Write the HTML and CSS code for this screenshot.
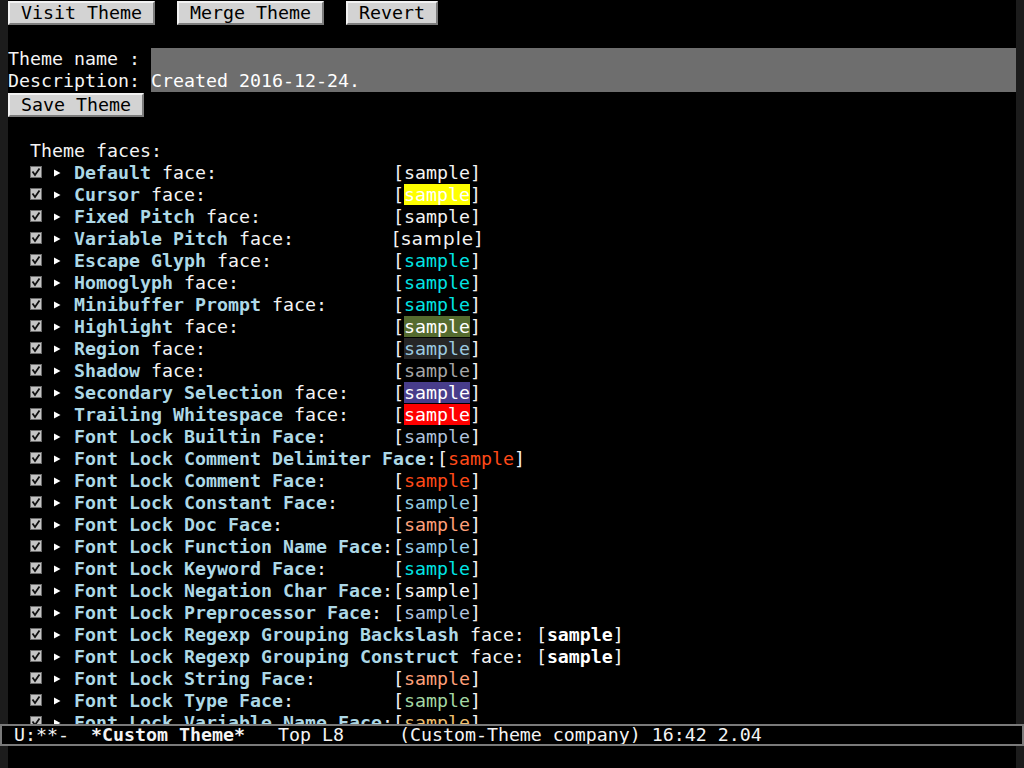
FILE: index.html
```html
<!DOCTYPE html>
<html>
<head>
<meta charset="utf-8">
<title>*Custom Theme*</title>
<link rel="stylesheet" href="styles.css">
</head>
<body>
<div class="window">
  <div class="fringe"></div>
  <div class="buffer">
    <div class="btnrow"><span class="btn">Visit Theme</span><span class="btn">Merge Theme</span><span class="btn">Revert</span></div>
    <div class="line"> </div>
    <div class="fieldrow"><span class="flabel">Theme name : </span><span class="field"> </span></div>
    <div class="fieldrow"><span class="flabel">Description: </span><span class="field">Created 2016-12-24.</span></div>
    <div class="btnrow"><span class="btn">Save Theme</span></div>
    <div class="line"> </div>
    <div class="line">  Theme faces:</div>
    <div class="faces">
      <div class="row">  <span class="cb"><svg width="12" height="12" viewBox="0 0 12 12"><rect x="0.5" y="0.5" width="11" height="11" fill="#c4c4c4" stroke="#6c6c6c"/><path d="M2.5 5.5 L5 9 L9.5 2.5" fill="none" stroke="#111" stroke-width="1.8"/></svg></span> <span class="tri"><svg width="7" height="8" viewBox="0 0 7 8"><polygon points="0,0.5 6.5,4 0,7.5" fill="#fff"/></svg></span> <span class="label"><b class="tag">Default</b> face:</span>[<span class="s">sample</span>]</div>
      <div class="row">  <span class="cb"><svg width="12" height="12" viewBox="0 0 12 12"><rect x="0.5" y="0.5" width="11" height="11" fill="#c4c4c4" stroke="#6c6c6c"/><path d="M2.5 5.5 L5 9 L9.5 2.5" fill="none" stroke="#111" stroke-width="1.8"/></svg></span> <span class="tri"><svg width="7" height="8" viewBox="0 0 7 8"><polygon points="0,0.5 6.5,4 0,7.5" fill="#fff"/></svg></span> <span class="label"><b class="tag">Cursor</b> face:</span>[<span class="s s-cursor">sample</span>]</div>
      <div class="row">  <span class="cb"><svg width="12" height="12" viewBox="0 0 12 12"><rect x="0.5" y="0.5" width="11" height="11" fill="#c4c4c4" stroke="#6c6c6c"/><path d="M2.5 5.5 L5 9 L9.5 2.5" fill="none" stroke="#111" stroke-width="1.8"/></svg></span> <span class="tri"><svg width="7" height="8" viewBox="0 0 7 8"><polygon points="0,0.5 6.5,4 0,7.5" fill="#fff"/></svg></span> <span class="label"><b class="tag">Fixed Pitch</b> face:</span>[<span class="s">sample</span>]</div>
      <div class="row">  <span class="cb"><svg width="12" height="12" viewBox="0 0 12 12"><rect x="0.5" y="0.5" width="11" height="11" fill="#c4c4c4" stroke="#6c6c6c"/><path d="M2.5 5.5 L5 9 L9.5 2.5" fill="none" stroke="#111" stroke-width="1.8"/></svg></span> <span class="tri"><svg width="7" height="8" viewBox="0 0 7 8"><polygon points="0,0.5 6.5,4 0,7.5" fill="#fff"/></svg></span> <span class="label"><b class="tag">Variable Pitch</b> face:</span><span class="s-var">[sample]</span></div>
      <div class="row">  <span class="cb"><svg width="12" height="12" viewBox="0 0 12 12"><rect x="0.5" y="0.5" width="11" height="11" fill="#c4c4c4" stroke="#6c6c6c"/><path d="M2.5 5.5 L5 9 L9.5 2.5" fill="none" stroke="#111" stroke-width="1.8"/></svg></span> <span class="tri"><svg width="7" height="8" viewBox="0 0 7 8"><polygon points="0,0.5 6.5,4 0,7.5" fill="#fff"/></svg></span> <span class="label"><b class="tag">Escape Glyph</b> face:</span>[<span class="s s-cyan">sample</span>]</div>
      <div class="row">  <span class="cb"><svg width="12" height="12" viewBox="0 0 12 12"><rect x="0.5" y="0.5" width="11" height="11" fill="#c4c4c4" stroke="#6c6c6c"/><path d="M2.5 5.5 L5 9 L9.5 2.5" fill="none" stroke="#111" stroke-width="1.8"/></svg></span> <span class="tri"><svg width="7" height="8" viewBox="0 0 7 8"><polygon points="0,0.5 6.5,4 0,7.5" fill="#fff"/></svg></span> <span class="label"><b class="tag">Homoglyph</b> face:</span>[<span class="s s-cyan">sample</span>]</div>
      <div class="row">  <span class="cb"><svg width="12" height="12" viewBox="0 0 12 12"><rect x="0.5" y="0.5" width="11" height="11" fill="#c4c4c4" stroke="#6c6c6c"/><path d="M2.5 5.5 L5 9 L9.5 2.5" fill="none" stroke="#111" stroke-width="1.8"/></svg></span> <span class="tri"><svg width="7" height="8" viewBox="0 0 7 8"><polygon points="0,0.5 6.5,4 0,7.5" fill="#fff"/></svg></span> <span class="label"><b class="tag">Minibuffer Prompt</b> face:</span>[<span class="s s-cyan">sample</span>]</div>
      <div class="row">  <span class="cb"><svg width="12" height="12" viewBox="0 0 12 12"><rect x="0.5" y="0.5" width="11" height="11" fill="#c4c4c4" stroke="#6c6c6c"/><path d="M2.5 5.5 L5 9 L9.5 2.5" fill="none" stroke="#111" stroke-width="1.8"/></svg></span> <span class="tri"><svg width="7" height="8" viewBox="0 0 7 8"><polygon points="0,0.5 6.5,4 0,7.5" fill="#fff"/></svg></span> <span class="label"><b class="tag">Highlight</b> face:</span>[<span class="s s-highlight">sample</span>]</div>
      <div class="row">  <span class="cb"><svg width="12" height="12" viewBox="0 0 12 12"><rect x="0.5" y="0.5" width="11" height="11" fill="#c4c4c4" stroke="#6c6c6c"/><path d="M2.5 5.5 L5 9 L9.5 2.5" fill="none" stroke="#111" stroke-width="1.8"/></svg></span> <span class="tri"><svg width="7" height="8" viewBox="0 0 7 8"><polygon points="0,0.5 6.5,4 0,7.5" fill="#fff"/></svg></span> <span class="label"><b class="tag">Region</b> face:</span>[<span class="s s-region">sample</span>]</div>
      <div class="row">  <span class="cb"><svg width="12" height="12" viewBox="0 0 12 12"><rect x="0.5" y="0.5" width="11" height="11" fill="#c4c4c4" stroke="#6c6c6c"/><path d="M2.5 5.5 L5 9 L9.5 2.5" fill="none" stroke="#111" stroke-width="1.8"/></svg></span> <span class="tri"><svg width="7" height="8" viewBox="0 0 7 8"><polygon points="0,0.5 6.5,4 0,7.5" fill="#fff"/></svg></span> <span class="label"><b class="tag">Shadow</b> face:</span>[<span class="s s-shadow">sample</span>]</div>
      <div class="row">  <span class="cb"><svg width="12" height="12" viewBox="0 0 12 12"><rect x="0.5" y="0.5" width="11" height="11" fill="#c4c4c4" stroke="#6c6c6c"/><path d="M2.5 5.5 L5 9 L9.5 2.5" fill="none" stroke="#111" stroke-width="1.8"/></svg></span> <span class="tri"><svg width="7" height="8" viewBox="0 0 7 8"><polygon points="0,0.5 6.5,4 0,7.5" fill="#fff"/></svg></span> <span class="label"><b class="tag">Secondary Selection</b> face:</span>[<span class="s s-secondary">sample</span>]</div>
      <div class="row">  <span class="cb"><svg width="12" height="12" viewBox="0 0 12 12"><rect x="0.5" y="0.5" width="11" height="11" fill="#c4c4c4" stroke="#6c6c6c"/><path d="M2.5 5.5 L5 9 L9.5 2.5" fill="none" stroke="#111" stroke-width="1.8"/></svg></span> <span class="tri"><svg width="7" height="8" viewBox="0 0 7 8"><polygon points="0,0.5 6.5,4 0,7.5" fill="#fff"/></svg></span> <span class="label"><b class="tag">Trailing Whitespace</b> face:</span>[<span class="s s-trailing">sample</span>]</div>
      <div class="row">  <span class="cb"><svg width="12" height="12" viewBox="0 0 12 12"><rect x="0.5" y="0.5" width="11" height="11" fill="#c4c4c4" stroke="#6c6c6c"/><path d="M2.5 5.5 L5 9 L9.5 2.5" fill="none" stroke="#111" stroke-width="1.8"/></svg></span> <span class="tri"><svg width="7" height="8" viewBox="0 0 7 8"><polygon points="0,0.5 6.5,4 0,7.5" fill="#fff"/></svg></span> <span class="label"><b class="tag">Font Lock Builtin Face</b>:</span>[<span class="s s-builtin">sample</span>]</div>
      <div class="row">  <span class="cb"><svg width="12" height="12" viewBox="0 0 12 12"><rect x="0.5" y="0.5" width="11" height="11" fill="#c4c4c4" stroke="#6c6c6c"/><path d="M2.5 5.5 L5 9 L9.5 2.5" fill="none" stroke="#111" stroke-width="1.8"/></svg></span> <span class="tri"><svg width="7" height="8" viewBox="0 0 7 8"><polygon points="0,0.5 6.5,4 0,7.5" fill="#fff"/></svg></span> <span class="label"><b class="tag">Font Lock Comment Delimiter Face</b>:</span>[<span class="s s-comment">sample</span>]</div>
      <div class="row">  <span class="cb"><svg width="12" height="12" viewBox="0 0 12 12"><rect x="0.5" y="0.5" width="11" height="11" fill="#c4c4c4" stroke="#6c6c6c"/><path d="M2.5 5.5 L5 9 L9.5 2.5" fill="none" stroke="#111" stroke-width="1.8"/></svg></span> <span class="tri"><svg width="7" height="8" viewBox="0 0 7 8"><polygon points="0,0.5 6.5,4 0,7.5" fill="#fff"/></svg></span> <span class="label"><b class="tag">Font Lock Comment Face</b>:</span>[<span class="s s-comment">sample</span>]</div>
      <div class="row">  <span class="cb"><svg width="12" height="12" viewBox="0 0 12 12"><rect x="0.5" y="0.5" width="11" height="11" fill="#c4c4c4" stroke="#6c6c6c"/><path d="M2.5 5.5 L5 9 L9.5 2.5" fill="none" stroke="#111" stroke-width="1.8"/></svg></span> <span class="tri"><svg width="7" height="8" viewBox="0 0 7 8"><polygon points="0,0.5 6.5,4 0,7.5" fill="#fff"/></svg></span> <span class="label"><b class="tag">Font Lock Constant Face</b>:</span>[<span class="s s-constant">sample</span>]</div>
      <div class="row">  <span class="cb"><svg width="12" height="12" viewBox="0 0 12 12"><rect x="0.5" y="0.5" width="11" height="11" fill="#c4c4c4" stroke="#6c6c6c"/><path d="M2.5 5.5 L5 9 L9.5 2.5" fill="none" stroke="#111" stroke-width="1.8"/></svg></span> <span class="tri"><svg width="7" height="8" viewBox="0 0 7 8"><polygon points="0,0.5 6.5,4 0,7.5" fill="#fff"/></svg></span> <span class="label"><b class="tag">Font Lock Doc Face</b>:</span>[<span class="s s-string">sample</span>]</div>
      <div class="row">  <span class="cb"><svg width="12" height="12" viewBox="0 0 12 12"><rect x="0.5" y="0.5" width="11" height="11" fill="#c4c4c4" stroke="#6c6c6c"/><path d="M2.5 5.5 L5 9 L9.5 2.5" fill="none" stroke="#111" stroke-width="1.8"/></svg></span> <span class="tri"><svg width="7" height="8" viewBox="0 0 7 8"><polygon points="0,0.5 6.5,4 0,7.5" fill="#fff"/></svg></span> <span class="label"><b class="tag">Font Lock Function Name Face</b>:</span>[<span class="s s-function">sample</span>]</div>
      <div class="row">  <span class="cb"><svg width="12" height="12" viewBox="0 0 12 12"><rect x="0.5" y="0.5" width="11" height="11" fill="#c4c4c4" stroke="#6c6c6c"/><path d="M2.5 5.5 L5 9 L9.5 2.5" fill="none" stroke="#111" stroke-width="1.8"/></svg></span> <span class="tri"><svg width="7" height="8" viewBox="0 0 7 8"><polygon points="0,0.5 6.5,4 0,7.5" fill="#fff"/></svg></span> <span class="label"><b class="tag">Font Lock Keyword Face</b>:</span>[<span class="s s-cyan">sample</span>]</div>
      <div class="row">  <span class="cb"><svg width="12" height="12" viewBox="0 0 12 12"><rect x="0.5" y="0.5" width="11" height="11" fill="#c4c4c4" stroke="#6c6c6c"/><path d="M2.5 5.5 L5 9 L9.5 2.5" fill="none" stroke="#111" stroke-width="1.8"/></svg></span> <span class="tri"><svg width="7" height="8" viewBox="0 0 7 8"><polygon points="0,0.5 6.5,4 0,7.5" fill="#fff"/></svg></span> <span class="label"><b class="tag">Font Lock Negation Char Face</b>:</span>[<span class="s">sample</span>]</div>
      <div class="row">  <span class="cb"><svg width="12" height="12" viewBox="0 0 12 12"><rect x="0.5" y="0.5" width="11" height="11" fill="#c4c4c4" stroke="#6c6c6c"/><path d="M2.5 5.5 L5 9 L9.5 2.5" fill="none" stroke="#111" stroke-width="1.8"/></svg></span> <span class="tri"><svg width="7" height="8" viewBox="0 0 7 8"><polygon points="0,0.5 6.5,4 0,7.5" fill="#fff"/></svg></span> <span class="label"><b class="tag">Font Lock Preprocessor Face</b>:</span>[<span class="s s-builtin">sample</span>]</div>
      <div class="row">  <span class="cb"><svg width="12" height="12" viewBox="0 0 12 12"><rect x="0.5" y="0.5" width="11" height="11" fill="#c4c4c4" stroke="#6c6c6c"/><path d="M2.5 5.5 L5 9 L9.5 2.5" fill="none" stroke="#111" stroke-width="1.8"/></svg></span> <span class="tri"><svg width="7" height="8" viewBox="0 0 7 8"><polygon points="0,0.5 6.5,4 0,7.5" fill="#fff"/></svg></span> <span class="label"><b class="tag">Font Lock Regexp Grouping Backslash</b> face: </span>[<b class="s">sample</b>]</div>
      <div class="row">  <span class="cb"><svg width="12" height="12" viewBox="0 0 12 12"><rect x="0.5" y="0.5" width="11" height="11" fill="#c4c4c4" stroke="#6c6c6c"/><path d="M2.5 5.5 L5 9 L9.5 2.5" fill="none" stroke="#111" stroke-width="1.8"/></svg></span> <span class="tri"><svg width="7" height="8" viewBox="0 0 7 8"><polygon points="0,0.5 6.5,4 0,7.5" fill="#fff"/></svg></span> <span class="label"><b class="tag">Font Lock Regexp Grouping Construct</b> face: </span>[<b class="s">sample</b>]</div>
      <div class="row">  <span class="cb"><svg width="12" height="12" viewBox="0 0 12 12"><rect x="0.5" y="0.5" width="11" height="11" fill="#c4c4c4" stroke="#6c6c6c"/><path d="M2.5 5.5 L5 9 L9.5 2.5" fill="none" stroke="#111" stroke-width="1.8"/></svg></span> <span class="tri"><svg width="7" height="8" viewBox="0 0 7 8"><polygon points="0,0.5 6.5,4 0,7.5" fill="#fff"/></svg></span> <span class="label"><b class="tag">Font Lock String Face</b>:</span>[<span class="s s-string">sample</span>]</div>
      <div class="row">  <span class="cb"><svg width="12" height="12" viewBox="0 0 12 12"><rect x="0.5" y="0.5" width="11" height="11" fill="#c4c4c4" stroke="#6c6c6c"/><path d="M2.5 5.5 L5 9 L9.5 2.5" fill="none" stroke="#111" stroke-width="1.8"/></svg></span> <span class="tri"><svg width="7" height="8" viewBox="0 0 7 8"><polygon points="0,0.5 6.5,4 0,7.5" fill="#fff"/></svg></span> <span class="label"><b class="tag">Font Lock Type Face</b>:</span>[<span class="s s-type">sample</span>]</div>
      <div class="row">  <span class="cb"><svg width="12" height="12" viewBox="0 0 12 12"><rect x="0.5" y="0.5" width="11" height="11" fill="#c4c4c4" stroke="#6c6c6c"/><path d="M2.5 5.5 L5 9 L9.5 2.5" fill="none" stroke="#111" stroke-width="1.8"/></svg></span> <span class="tri"><svg width="7" height="8" viewBox="0 0 7 8"><polygon points="0,0.5 6.5,4 0,7.5" fill="#fff"/></svg></span> <span class="label"><b class="tag">Font Lock Variable Name Face</b>:</span>[<span class="s s-variable">sample</span>]</div>
    </div>
  </div>
  <div class="fringe"></div>
</div>
<div class="modeline"> U:**-  <b>*Custom Theme*</b>   Top L8     (Custom-Theme company) 16:42 2.04</div>
<div class="minibuf"><div class="fringe"></div><div class="fringe"></div></div>
</body>
</html>
```

FILE: styles.css
```css
html, body {
  margin: 0;
  padding: 0;
}
body {
  width: 1024px;
  height: 768px;
  overflow: hidden;
  background: #000;
  color: #f4f4f4;
  font-family: "DejaVu Sans Mono", "Liberation Mono", monospace;
  font-size: 18.27px;
}
.window {
  display: flex;
  height: 724px;
}
.fringe {
  width: 8px;
  flex: none;
  background: #1c1c1c;
}
.buffer {
  flex: 1;
  min-width: 0;
  overflow: hidden;
  line-height: 22px;
}
.line {
  height: 22px;
  white-space: pre;
}
.btnrow {
  height: 26px;
  display: flex;
  align-items: center;
  gap: 22px;
}
.btn {
  box-sizing: border-box;
  height: 24px;
  line-height: 20px;
  padding: 0 11px;
  background: #d3d3d3;
  color: #000;
  border: 2px solid;
  border-color: #f2f2f2 #7c7c7c #7c7c7c #f2f2f2;
  white-space: pre;
}
.fieldrow {
  display: flex;
  height: 22px;
  white-space: pre;
}
.flabel {
  flex: none;
}
.field {
  flex: 1;
  background: #6e6e6e;
  color: #fff;
}
.row {
  height: 22px;
  white-space: pre;
}
.cb {
  display: inline-block;
  width: 11px;
  height: 22px;
  vertical-align: top;
}
.cb svg {
  display: block;
  margin-top: 4px;
}
.tri {
  display: inline-block;
  width: 11px;
  height: 22px;
  vertical-align: top;
}
.tri svg {
  display: block;
  margin: 7px 0 0 2px;
}
.label {
  display: inline-block;
  min-width: 29ch;
  vertical-align: top;
}
.tag {
  color: #add8e6;
  font-weight: bold;
}
.s-cursor { background: #ffff00; color: #fff; }
.s-cyan { color: #00e5e5; }
.s-highlight { background: #556b2f; color: #fff; }
.s-region { background: #262626; color: #9ccbe0; }
.s-shadow { color: #a6a6a6; }
.s-secondary { background: #483d8b; color: #fff; }
.s-trailing { background: #ff0000; color: #fff; }
.s-builtin { color: #b0c4de; }
.s-comment { color: #ff4a18; }
.s-constant { color: #95cde0; }
.s-string { color: #ffa07a; }
.s-function { color: #95cde8; }
.s-type { color: #a4d8a4; }
.s-variable { color: #f0c070; }
.s-var {
  font-family: "DejaVu Sans", sans-serif;
  letter-spacing: 1.1px;
}
b.s {
  font-weight: bold;
  color: #fff;
}
.modeline {
  box-sizing: border-box;
  height: 22px;
  border: 2px solid #7a7a7a;
  background: #000;
  line-height: 18px;
  white-space: pre;
  padding-left: 1px;
  overflow: hidden;
}
.minibuf {
  height: 22px;
  display: flex;
  justify-content: space-between;
}
```
